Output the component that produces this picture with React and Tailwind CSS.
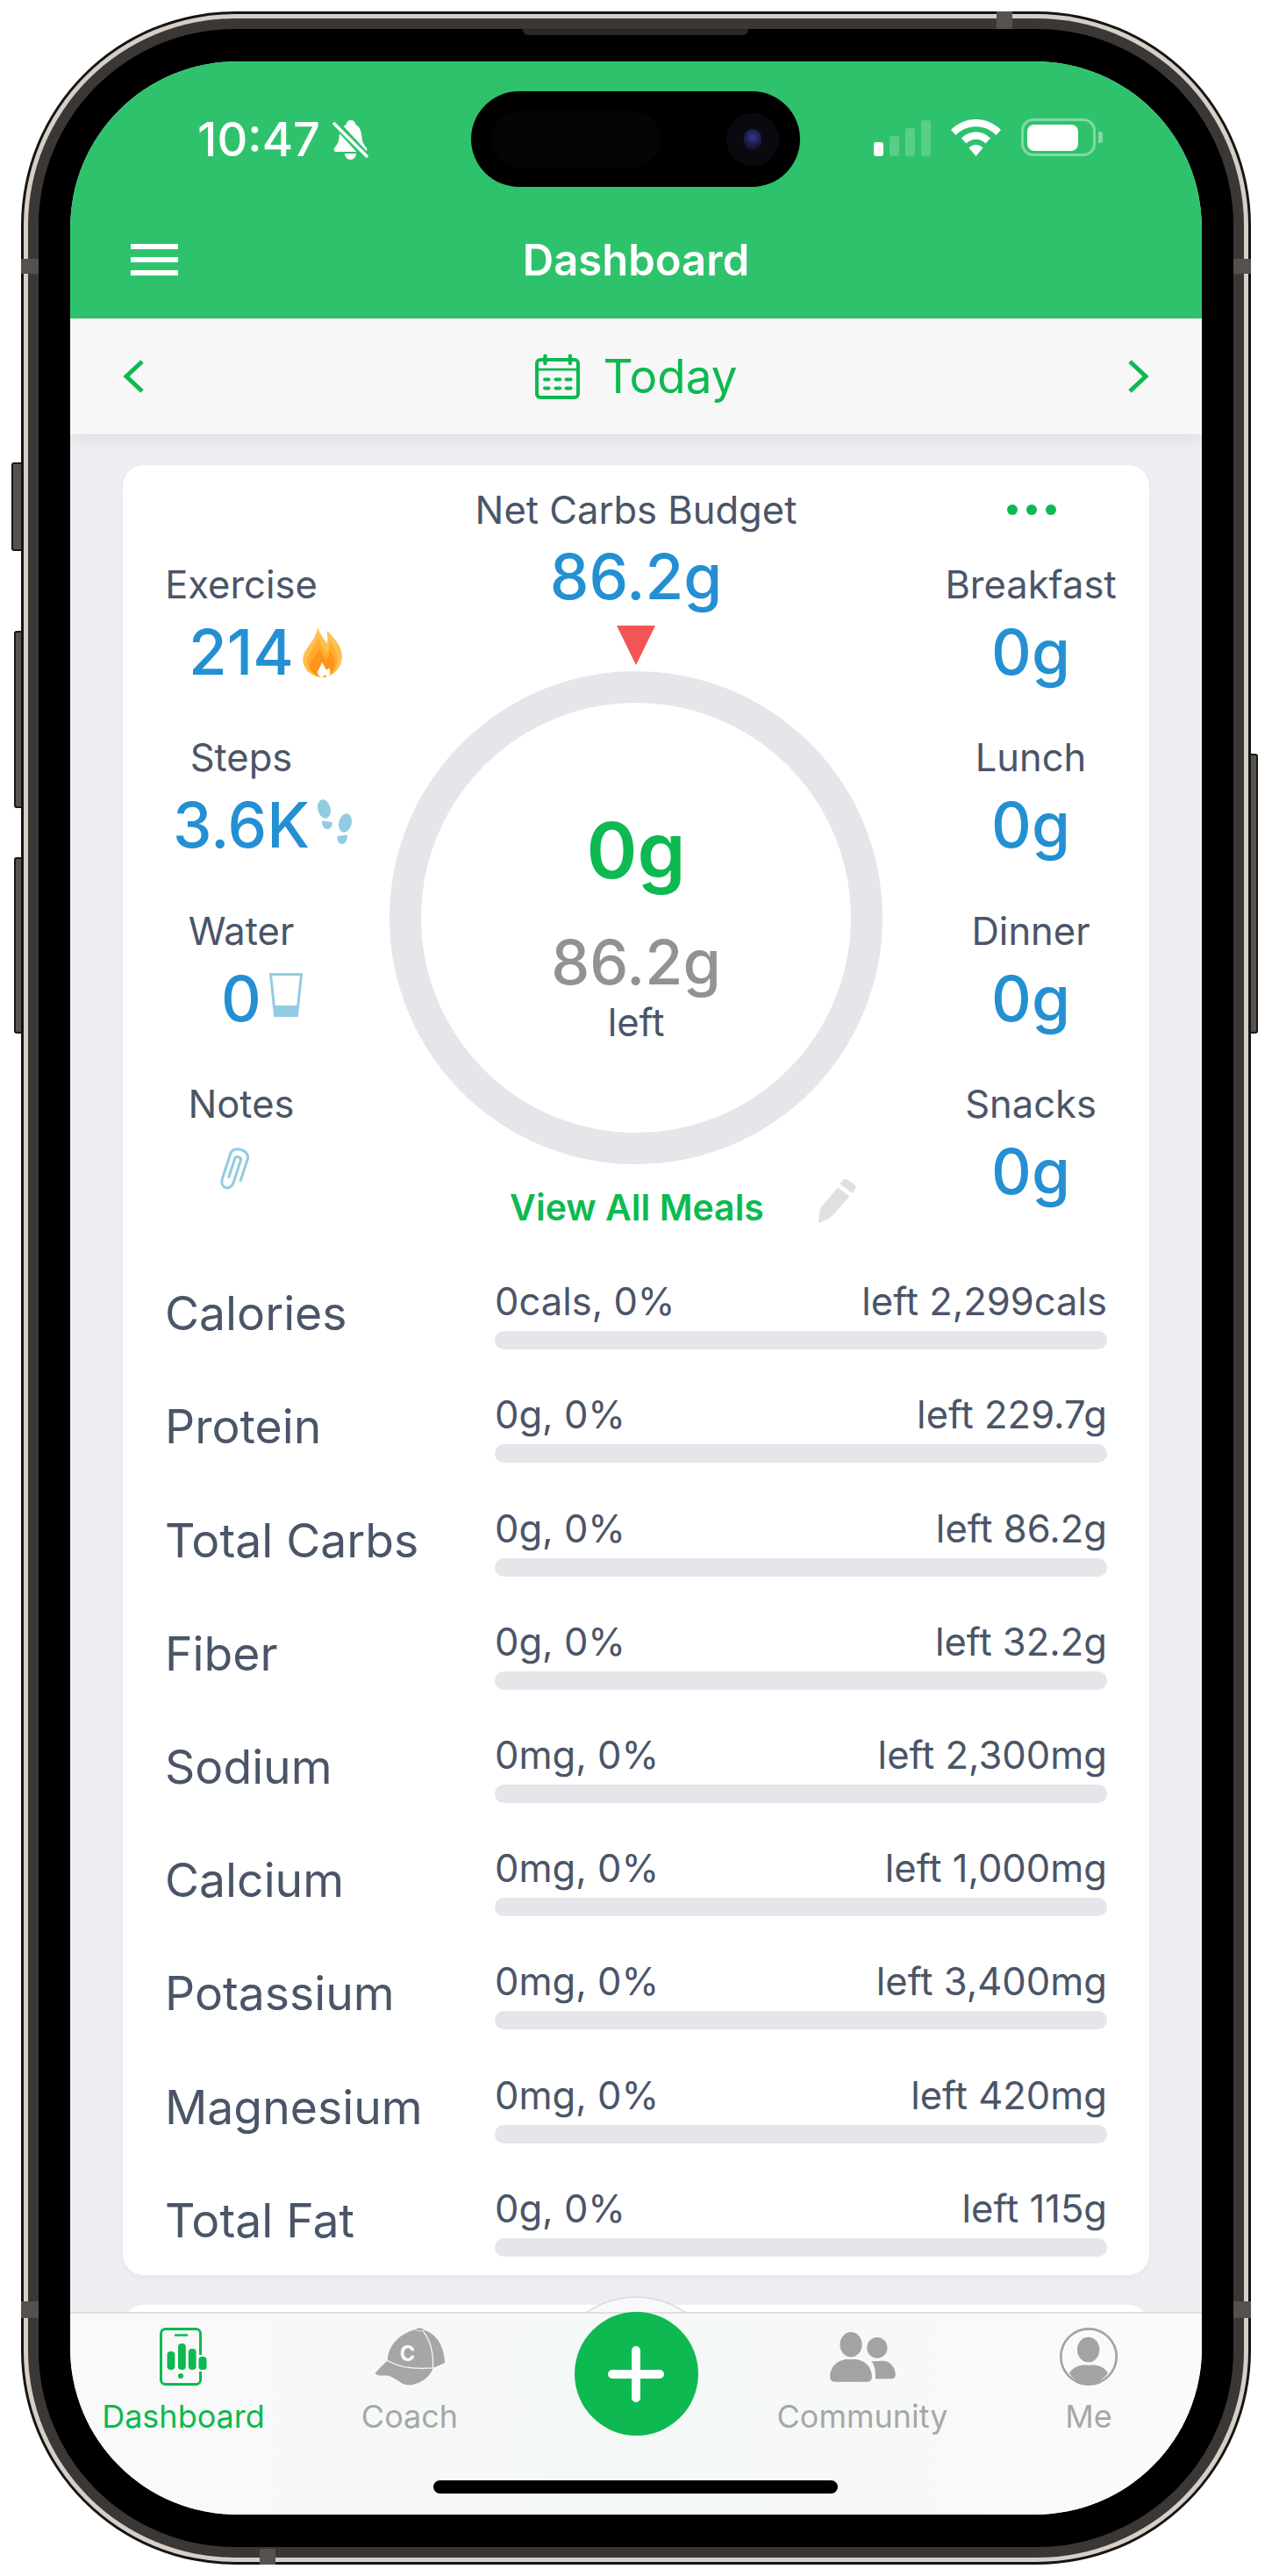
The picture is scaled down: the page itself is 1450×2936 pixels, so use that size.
const leftStats = [
  { label: "Exercise", value: "214", icon: "flame" },
  { label: "Steps", value: "3.6K", icon: "feet" },
  { label: "Water", value: "0", icon: "glass" },
  { label: "Notes", value: "", icon: "clip" },
];

const rightStats = [
  { label: "Breakfast", value: "0g" },
  { label: "Lunch", value: "0g" },
  { label: "Dinner", value: "0g" },
  { label: "Snacks", value: "0g" },
];

const nutrients = [
  { name: "Calories", used: "0cals, 0%", left: "left 2,299cals" },
  { name: "Protein", used: "0g, 0%", left: "left 229.7g" },
  { name: "Total Carbs", used: "0g, 0%", left: "left 86.2g" },
  { name: "Fiber", used: "0g, 0%", left: "left 32.2g" },
  { name: "Sodium", used: "0mg, 0%", left: "left 2,300mg" },
  { name: "Calcium", used: "0mg, 0%", left: "left 1,000mg" },
  { name: "Potassium", used: "0mg, 0%", left: "left 3,400mg" },
  { name: "Magnesium", used: "0mg, 0%", left: "left 420mg" },
  { name: "Total Fat", used: "0g, 0%", left: "left 115g" },
];

function Flame() {
  return (
    <svg width="47" height="58" viewBox="35 40 140 175">
      <path d="M90 42C95 70 116 85 120 100C126 85 120 70 122 55C150 85 175 110 172 150C170 185 140 212 110 215C70 215 38 190 38 155C38 115 80 95 90 42Z" fill="#fdc04f" />
      <path d="M90 75C95 100 115 120 120 135C130 120 130 100 128 90C150 115 160 140 155 165C150 195 130 213 110 215C80 214 50 190 52 160C54 130 85 110 90 75Z" fill="#ffab2e" />
      <path d="M95 115C100 135 115 150 120 160C125 145 130 135 130 125C145 145 155 165 140 195C130 210 115 215 100 214C75 210 60 190 62 170C65 150 90 140 95 115Z" fill="#ff9418" />
      <path d="M103 162C100 180 88 190 88 200C90 210 100 215 105 215C112 205 115 205 122 214C132 210 135 195 128 182C125 190 118 190 115 185C113 175 106 170 103 162Z" fill="#ffffff" />
    </svg>
  );
}

function Feet() {
  return (
    <svg width="39" height="52" viewBox="0 0 39 52" fill="#93cbe2">
      <ellipse cx="7.5" cy="11" rx="7.2" ry="11" transform="rotate(-14 7.5 11)" />
      <path d="M5 24.5L16.5 26C17 31 15 34 11 34C7 34 5 30 5 24.5Z" />
      <ellipse cx="31.5" cy="27" rx="7.2" ry="11" transform="rotate(14 31.5 27)" />
      <path d="M22.5 42L34 40.5C34 46 32 51 28 51C24 51 22 47 22.5 42Z" />
    </svg>
  );
}

function Glass() {
  return (
    <svg width="38" height="50" viewBox="0 0 38 50">
      <path d="M1.5 1.5H36.5L31.5 48.5H6.5Z" fill="none" stroke="#93cbe2" strokeWidth="3" />
      <path d="M5 37H33L31.5 50H6.5Z" fill="#93cbe2" />
    </svg>
  );
}

function Clip() {
  return (
    <svg width="34" height="53" viewBox="0 0 34 53" fill="none" stroke="#93cbe2" strokeWidth="3" strokeLinecap="round">
      <g transform="rotate(18 17 26)">
        <path d="M13.5 35V13C13.5 9 20.5 9 20.5 13V39C20.5 50.5 7 50.5 7 39V9C7 -1.5 27.5 -1.5 27.5 9V35" />
      </g>
    </svg>
  );
}

function StatIcon({ type }) {
  if (type === "flame") return <Flame />;
  if (type === "feet") return <Feet />;
  if (type === "glass") return <Glass />;
  return null;
}

function BellSlash() {
  return (
    <svg width="41" height="45" viewBox="0 0 41 45">
      <path d="M21 0C24 0 26 2 26.5 5C32 8 33 14 33.5 20C34 26 37 29 39 32C40 34 39 36 37 36H4C2 36 1 34 2 32C5 28 7 26 7.5 20C8 13 10 8 15.5 5C16 2 18 0 21 0Z" fill="#ffffff" />
      <path d="M14 38H27C27 42 24 45 20.5 45C17 45 14 42 14 38Z" fill="#ffffff" />
      <path d="M0 0L41 44" stroke="#2fc26c" strokeWidth="9" />
      <path d="M1 3L40 42" stroke="#ffffff" strokeWidth="3.5" />
    </svg>
  );
}

function Wifi() {
  return (
    <svg width="57" height="42" viewBox="0 0 57 42" fill="#ffffff">
      <path d="M28.5 0C39.5 0 49.5 4.5 57 12L51.5 18C45.5 12 37.5 8.3 28.5 8.3C19.5 8.3 11.5 12 5.5 18L0 12C7.5 4.5 17.5 0 28.5 0Z" />
      <path d="M28.5 14.5C34.5 14.5 40.5 17 45 21.5L39.5 27.5C36.5 24.5 32.5 22.8 28.5 22.8C24.5 22.8 20.5 24.5 17.5 27.5L12 21.5C16.5 17 22.5 14.5 28.5 14.5Z" />
      <path d="M28.5 29C31.5 29 34.5 30.3 36.5 32.5L28.5 42L20.5 32.5C22.5 30.3 25.5 29 28.5 29Z" />
    </svg>
  );
}

function CalendarIcon() {
  return (
    <svg width="53" height="53" viewBox="30 22 158 158" fill="none" stroke="#0db950">
      <rect x="39" y="43" width="140" height="128" rx="12" strokeWidth="12" />
      <path d="M39 76H179" strokeWidth="8" />
      <path d="M67 30V55M152 30V55" strokeWidth="13" strokeLinecap="round" />
      <path d="M66 110H79M103 110H117M139 110H154M66 140H79M103 140H117M139 140H154" strokeWidth="12" strokeLinecap="round" />
    </svg>
  );
}

function Pencil() {
  return (
    <svg width="43" height="50" viewBox="0 0 43 50" fill="#e0e0e0">
      <path d="M27 2C29 -0.5 32 -0.5 34 1L41 6C43 8 43 10 41.5 12L38.5 16L24 5Z" />
      <path d="M22 9.5L35.5 19.5L15.5 42C13 45 9 46 0 50C0.5 42 1 37 3 32Z" />
    </svg>
  );
}

function DashboardTabIcon() {
  return (
    <svg width="54" height="66" viewBox="0 0 54 66">
      <rect x="1.5" y="1.5" width="45" height="63" rx="5" fill="none" stroke="#0db950" strokeWidth="3" />
      <path d="M18 8.5H31" stroke="#0db950" strokeWidth="2.5" strokeLinecap="round" />
      <rect x="8.5" y="27" width="8.8" height="21" rx="4" fill="#0db950" />
      <rect x="21" y="18" width="8.8" height="30" rx="4" fill="#0db950" />
      <rect x="32.8" y="24" width="8.8" height="24" rx="4" fill="#0db950" />
      <rect x="42" y="31" width="12" height="19" fill="#f9f9f9" />
      <rect x="44.5" y="33" width="9" height="15" rx="3.5" fill="#0db950" />
      <circle cx="24" cy="55" r="3" fill="#0db950" />
    </svg>
  );
}

function CoachTabIcon() {
  return (
    <svg width="85" height="66" viewBox="770 38 246 201">
      <path d="M815 152C815 100 860 52 925 42C965 50 1008 75 1014 160L972 178C965 205 930 237 885 237C860 235 835 205 812 204C795 204 775 206 772 195C785 180 800 165 815 152Z" fill="#a6a6a6" />
      <ellipse cx="926" cy="44" rx="13" ry="6" fill="#a6a6a6" stroke="#f9f9f9" strokeWidth="2" />
      <path d="M815 152C860 180 920 182 972 178M938 50C965 85 975 130 972 178" fill="none" stroke="#f9f9f9" strokeWidth="4" />
      <text x="884" y="153" textAnchor="middle" fontSize="72" fontWeight="700" fill="#f9f9f9" fontFamily="Inter, sans-serif">C</text>
    </svg>
  );
}

function CommunityTabIcon() {
  return (
    <svg width="75" height="57" viewBox="48 36 225 172" fill="#a3a3a3">
      <ellipse cx="120" cy="79" rx="38" ry="43" />
      <ellipse cx="210" cy="90" rx="35" ry="36" />
      <path d="M48 190C48 150 80 126 120 130C160 126 192 150 192 190C192 200 186 207 176 207H64C54 207 48 200 48 190Z" />
      <path d="M190 136C204 138 216 135 232 135C255 136 273 160 273 182C273 191 268 197 258 197H204C205 170 202 150 190 136Z" />
    </svg>
  );
}

function MeTabIcon() {
  return (
    <svg width="66" height="66" viewBox="840 10 198 198" fill="#a3a3a3">
      <circle cx="939" cy="109" r="95" fill="none" stroke="#a3a3a3" strokeWidth="8" />
      <ellipse cx="938" cy="85" rx="38" ry="43" />
      <path d="M873 165C890 140 920 135 938 139C960 135 990 140 1005 165C985 192 960 204 938 204C915 204 890 192 873 165Z" />
    </svg>
  );
}

function Tab({ label, active, children }) {
  return (
    <div className="flex w-[258px] flex-col items-center pt-[16px]">
      <div className="flex h-[66px] items-center justify-center">{children}</div>
      <div className={`mt-[13px] text-[36px] leading-[44px] ${active ? "text-[#0db950]" : "text-[#a5a8a7]"}`}>{label}</div>
    </div>
  );
}

export default function App() {
  return (
    <div className="relative h-[2936px] w-[1450px] bg-white font-['Inter',sans-serif]">
      {/* side buttons */}
      <div className="absolute left-[13px] top-[527px] h-[101px] w-[13px] rounded-l-[3px] border-2 border-[#1a1815] bg-[#57524d]" />
      <div className="absolute left-[16px] top-[719px] h-[202px] w-[10px] rounded-l-[3px] border-2 border-[#1a1815] bg-[#57524d]" />
      <div className="absolute left-[16px] top-[977px] h-[201px] w-[10px] rounded-l-[3px] border-2 border-[#1a1815] bg-[#57524d]" />
      <div className="absolute left-[1424px] top-[859px] h-[319px] w-[10px] rounded-r-[3px] border-2 border-[#1a1815] bg-[#57524d]" />

      {/* phone frame */}
      <div className="absolute left-[24px] top-[13px] h-[2910px] w-[1402px] rounded-[244px] bg-[#171513] p-[3px]">
        <div className="h-full w-full rounded-[241px] bg-[#d6cfc8] p-[5px]">
          <div className="h-full w-full rounded-[236px] bg-[#3b3734] p-[12px]">
            <div className="h-full w-full rounded-[224px] bg-black px-[36px] py-[37px]">
              <div className="relative flex h-full w-full flex-col overflow-hidden rounded-[190px] bg-[#eeeef3]">
                {/* green header */}
                <div className="relative h-[293px] shrink-0 bg-[#2fc26c]">
                  <div className="flex items-start justify-between pl-[145px] pr-[113px] pt-[65px]">
                    <div className="flex items-center gap-[14px]">
                      <span className="text-[54px] font-medium leading-[48px] text-white">10:47</span>
                      <BellSlash />
                    </div>
                    <div className="flex items-end">
                      <div className="flex items-end gap-[7px]">
                        <div className="h-[16px] w-[11px] rounded-[3px] bg-white" />
                        <div className="h-[23px] w-[11px] rounded-[3px] bg-white/20" />
                        <div className="h-[32px] w-[11px] rounded-[3px] bg-white/20" />
                        <div className="h-[41px] w-[11px] rounded-[3px] bg-white/20" />
                      </div>
                      <div className="ml-[23px]"><Wifi /></div>
                      <div className="ml-[23px] flex h-[43px] w-[85px] items-center rounded-[14px] border-[3px] border-white/40 pl-[4px]">
                        <div className="h-[30px] w-[58px] rounded-[8px] bg-white" />
                      </div>
                      <div className="mb-[15px] ml-[3px] h-[13px] w-[5px] rounded-r-[3px] bg-white/40" />
                    </div>
                  </div>

                  {/* dynamic island */}
                  <div className="absolute left-[457px] top-[34px] flex h-[109px] w-[375px] items-center justify-between rounded-full bg-black pl-[23px] pr-[24px]">
                    <div className="h-[65px] w-[193px] rounded-full bg-[#050505]" />
                    <div className="flex h-[60px] w-[60px] items-center justify-center rounded-full bg-[#0b0810]">
                      <div className="h-[24px] w-[20px] rounded-full bg-[radial-gradient(circle_at_50%_40%,#34388c,#11132e_70%)]" />
                    </div>
                  </div>

                  <div className="absolute left-0 right-0 top-[199px] flex items-center justify-center">
                    <span className="text-[49px] font-semibold leading-[56px] text-white">Dashboard</span>
                  </div>
                  <div className="absolute left-[69px] top-[208px] flex w-[54px] flex-col gap-[9px]">
                    <div className="h-[6px] bg-white" />
                    <div className="h-[6px] bg-white" />
                    <div className="h-[6px] bg-white" />
                  </div>
                </div>

                {/* date row */}
                <div className="relative z-10 flex h-[132px] shrink-0 items-center justify-between bg-[#f7f7f8] pl-[60px] pr-[60px] shadow-[0_6px_20px_rgba(0,0,0,0.07)]">
                  <svg width="24" height="38" viewBox="0 0 24 38" fill="none" stroke="#0db950" strokeWidth="5"><path d="M22 2L4 19L22 36" /></svg>
                  <div className="flex items-center gap-[25px]">
                    <CalendarIcon />
                    <span className="text-[53px] leading-[60px] text-[#0db950]">Today</span>
                  </div>
                  <svg width="24" height="38" viewBox="0 0 24 38" fill="none" stroke="#0db950" strokeWidth="5"><path d="M2 2L20 19L2 36" /></svg>
                </div>

                {/* scroll area */}
                <div className="h-[2140px] shrink-0 overflow-hidden px-[60px] pt-[35px]">
                  <div className="h-[2063px] rounded-[24px] bg-white shadow-[0_3px_10px_rgba(0,0,0,0.04)]">
                    <div className="flex">
                      <div className="w-[270px] pt-[108px]">
                        {leftStats.map((stat) => (
                          <div key={stat.label} className="flex h-[197.3px] flex-col items-center">
                            <div className="text-[43.5px] leading-[56px] text-[#4a5568]">{stat.label}</div>
                            {stat.icon === "clip" ? (
                              <div className="mr-[16px] mt-[22px]"><Clip /></div>
                            ) : (
                              <div className="relative mt-[7px] text-[71px] font-medium leading-[84px] text-[#2490d3]">
                                {stat.value}
                                <div className="absolute left-full top-[13px] ml-[9px]"><StatIcon type={stat.icon} /></div>
                              </div>
                            )}
                          </div>
                        ))}
                      </div>

                      <div className="flex w-[630px] flex-col items-center pt-[23px]">
                        <div className="text-[43.5px] leading-[56px] text-[#4a5568]">Net Carbs Budget</div>
                        <div className="mt-[6px] text-[71px] font-medium leading-[84px] text-[#2490d3]">86.2g</div>
                        <svg className="mt-[14px]" width="44" height="45" viewBox="0 0 44 45"><path d="M0 0H44L22 45Z" fill="#f25555" /></svg>
                        <div className="mt-[7px] flex h-[562px] w-[562px] flex-col items-center rounded-full border-[36px] border-[#e5e5ea] pt-[118px]">
                          <div className="text-[88px] font-semibold leading-[100px] text-[#0db950]">0g</div>
                          <div className="mt-[36px] text-[70px] font-medium leading-[84px] text-[#929292]">86.2g</div>
                          <div className="mt-[-2px] text-[43.5px] leading-[56px] text-[#4a5568]">left</div>
                        </div>
                        <div className="mt-[17px] flex w-full items-center pl-[171px]">
                          <div className="w-[290px] whitespace-nowrap text-center text-[41px] font-semibold leading-[56px] text-[#0db950]">View All Meals</div>
                          <div className="mb-[14px] ml-[62px]"><Pencil /></div>
                        </div>
                      </div>

                      <div className="relative w-[270px] pt-[108px]">
                        <div className="absolute left-[108px] top-[45px] flex gap-[10px]">
                          <div className="h-[12px] w-[12px] rounded-full bg-[#0db950]" />
                          <div className="h-[12px] w-[12px] rounded-full bg-[#0db950]" />
                          <div className="h-[12px] w-[12px] rounded-full bg-[#0db950]" />
                        </div>
                        {rightStats.map((stat) => (
                          <div key={stat.label} className="flex h-[197.3px] flex-col items-center">
                            <div className="text-[43.5px] leading-[56px] text-[#4a5568]">{stat.label}</div>
                            <div className="mt-[7px] text-[71px] font-medium leading-[84px] text-[#2490d3]">{stat.value}</div>
                          </div>
                        ))}
                      </div>
                    </div>

                    <div className="mt-[29px] pl-[48px] pr-[48px]">
                      {nutrients.map((row) => (
                        <div key={row.name} className="flex h-[129.2px]">
                          <div className="w-[376px] text-[53.5px] leading-[82px] text-[#4a5568]">{row.name}</div>
                          <div className="flex-1">
                            <div className="flex justify-between text-[43.5px] leading-[55px] text-[#4a5568]">
                              <span>{row.used}</span>
                              <span>{row.left}</span>
                            </div>
                            <div className="mt-[6px] h-[21px] rounded-full bg-[#e5e5ea]" />
                          </div>
                        </div>
                      ))}
                    </div>
                  </div>
                  <div className="mt-[34px] h-[120px] rounded-[24px] bg-white" />
                </div>

                {/* tab bar */}
                <div className="relative z-20 flex h-[231px] shrink-0 border-t-2 border-[#dfdfe2] bg-linear-to-r from-[#f9f9f9] via-[#f4f8f6] to-[#fafafa]">
                  <div className="absolute left-[546px] top-[-20px] h-[18px] w-[198px] overflow-hidden">
                    <div className="h-[198px] w-[198px] rounded-full border-2 border-[#dfdfe2] bg-[#f9f9f9]" />
                  </div>
                  <Tab label="Dashboard" active><DashboardTabIcon /></Tab>
                  <Tab label="Coach"><CoachTabIcon /></Tab>
                  <div className="flex w-[258px] justify-center">
                    <div className="relative z-10 mt-[-2px] flex h-[141px] w-[141px] items-center justify-center rounded-full bg-[#0db950]">
                      <svg width="64" height="64" viewBox="0 0 64 64" stroke="#ffffff" strokeWidth="10" strokeLinecap="round"><path d="M5 32H59M32 5V59" /></svg>
                    </div>
                  </div>
                  <Tab label="Community"><CommunityTabIcon /></Tab>
                  <Tab label="Me"><MeTabIcon /></Tab>
                  <div className="absolute bottom-[24px] left-[414px] h-[15px] w-[461px] rounded-full bg-black" />
                </div>
              </div>
            </div>
          </div>
        </div>

        {/* antenna bands and speaker */}
        <div className="absolute left-0 top-[282px] h-[17px] w-[20px] bg-[#55514e]" />
        <div className="absolute right-0 top-[282px] h-[17px] w-[20px] bg-[#55514e]" />
        <div className="absolute left-0 top-[2610px] h-[19px] w-[20px] bg-[#55514e]" />
        <div className="absolute right-0 top-[2610px] h-[19px] w-[20px] bg-[#55514e]" />
        <div className="absolute left-[1112px] top-0 h-[20px] w-[18px] bg-[#55514e]" />
        <div className="absolute bottom-0 left-[272px] h-[18px] w-[18px] bg-[#55514e]" />
        <div className="absolute left-[572px] top-[20px] h-[7px] w-[257px] rounded-b-[6px] bg-[#2a2826]" />
      </div>
    </div>
  );
}
